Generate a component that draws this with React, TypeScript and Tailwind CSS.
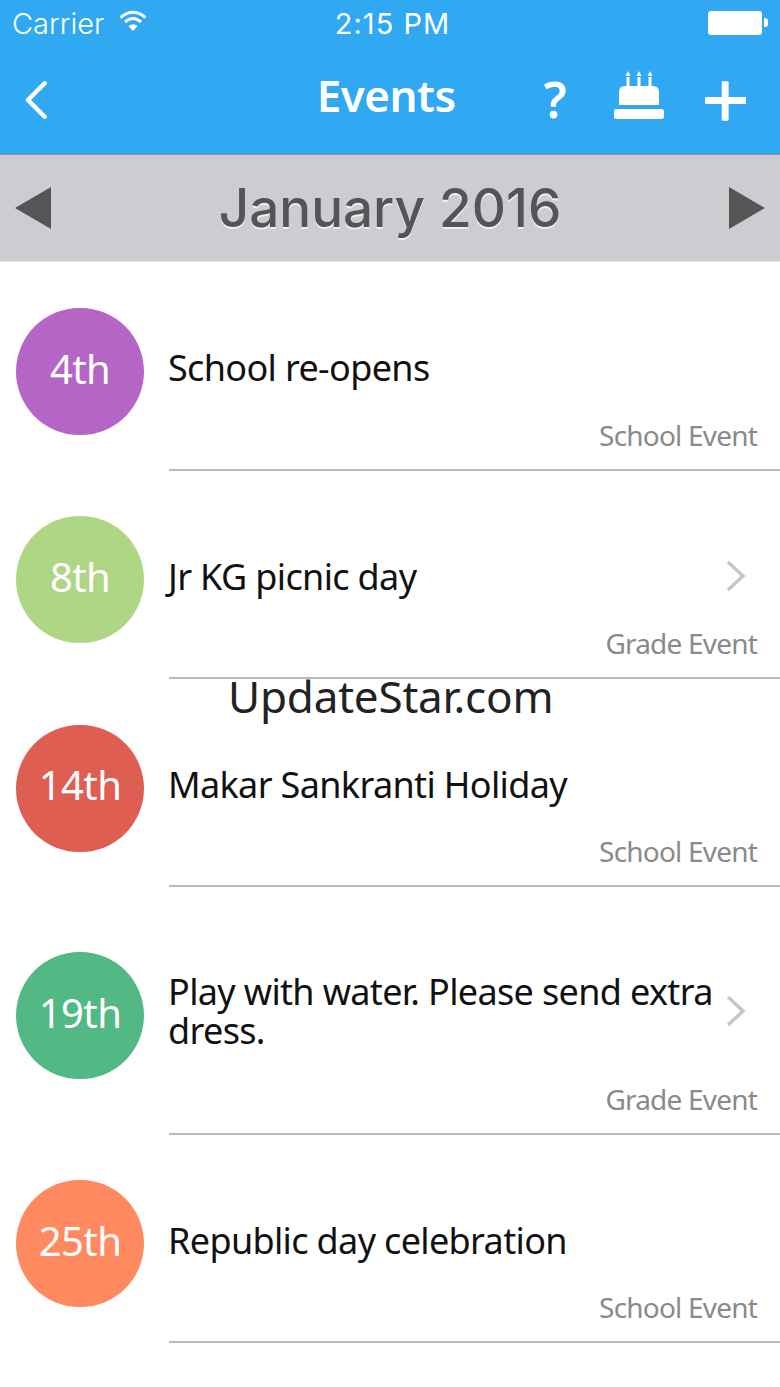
import React from "react";

const rows = [
  { day: "4th", bg: "bg-[#b565c6]", title: "School re-opens", label: "School Event", chevron: false, h: "h-[209px]", cm: "mt-[10px]" },
  { day: "8th", bg: "bg-[#afd684]", title: "Jr KG picnic day", label: "Grade Event", chevron: true, h: "h-[208px]", cm: "mt-[9px]" },
  { day: "14th", bg: "bg-[#de5f52]", title: "Makar Sankranti Holiday", label: "School Event", chevron: false, h: "h-[208px]", cm: "mt-[10px]" },
  { day: "19th", bg: "bg-[#52b985]", title: "Play with water. Please send extra dress.", label: "Grade Event", chevron: true, h: "h-[248px]", cm: "mt-[9px]" },
  { day: "25th", bg: "bg-[#ff8a5f]", title: "Republic day celebration", label: "School Event", chevron: false, h: "h-[208px]", cm: "mt-[9px]" },
];

function Cake() {
  return (
    <svg width="50" height="48" viewBox="0 0 50 48" fill="white">
      <path d="M5 34 V21 Q5 15 11 15 H39 Q45 15 45 21 V34 Z" />
      <rect x="0" y="38" width="50" height="10" rx="2.5" />
      <rect x="12.5" y="6" width="3" height="9" />
      <rect x="23.5" y="6" width="3" height="9" />
      <rect x="34.5" y="6" width="3" height="9" />
      <path d="M14 0 L16.5 5 H11.5 Z M25 0 L27.5 5 H22.5 Z M36 0 L38.5 5 H33.5 Z" />
    </svg>
  );
}

export default function App() {
  return (
    <div className="relative w-[780px] h-[1387px] bg-white overflow-hidden font-['Noto_Sans',sans-serif]">
      <header className="h-[155px] bg-[#30a8f2] border-b border-[#8f9295] text-white">
        <div className="h-[48px] flex items-center justify-between pl-3 pr-3 pb-[2px]">
          <div className="flex items-center gap-[15px] w-[200px]">
            <span className="font-['Inter',sans-serif] text-[29px] leading-none font-light">Carrier</span>
            <svg width="28" height="22" viewBox="0 0 28 22" fill="none" stroke="white" strokeWidth="3" className="-mt-1">
              <path d="M1.5 7.5 Q14 -3 26.5 7.5" />
              <path d="M6 12 Q14 5 22 12" />
              <path d="M14 21 L9.5 16 Q14 12.5 18.5 16 Z" fill="white" stroke="none" />
            </svg>
          </div>
          <span className="font-['Inter',sans-serif] text-[29px] leading-none font-normal tracking-[1px] ml-[5px]">2:15 PM</span>
          <div className="flex items-center justify-end w-[200px] -mt-[1px]">
            <div className="w-[54px] h-[24px] bg-white rounded-[3px]" />
            <div className="w-[4px] h-[9px] ml-[2px] bg-white rounded-r-[3px]" />
          </div>
        </div>
        <div className="h-[106px] flex items-center pl-[25px] pr-[34px] pb-[12px]">
          <svg width="22" height="40" viewBox="0 0 22 40" fill="none" stroke="white" strokeWidth="4.5" strokeLinecap="round" strokeLinejoin="round" className="mt-[10px]">
            <path d="M20 3 L3 20 L20 37" />
          </svg>
          <span className="ml-[270px] text-[44px] leading-none font-semibold tracking-[-0.5px]">Events</span>
          <span className="ml-[88px] text-[50px] leading-none font-semibold mt-[8px]">?</span>
          <div className="ml-[47px]"><Cake /></div>
          <svg width="42" height="40" viewBox="0 0 42 40" fill="white" className="ml-[41px] mt-[11px]">
            <rect x="0" y="16" width="42" height="7" rx="1" />
            <rect x="17" y="0" width="7" height="40" rx="1" />
          </svg>
        </div>
      </header>

      <div className="h-[107px] bg-[#cdcdd1] flex items-center justify-between px-[15px] border-b border-[#e4e4e6]">
        <svg width="37" height="42" viewBox="0 0 37 42" fill="#555555"><path d="M36 0 V42 L0 21 Z" /></svg>
        <span className="font-['Inter',sans-serif] text-[53px] leading-none font-medium text-[#555558] [text-shadow:0_2px_0_rgba(255,255,255,0.7)]">January 2016</span>
        <svg width="37" height="42" viewBox="0 0 37 42" fill="#555555"><path d="M1 0 V42 L37 21 Z" /></svg>
      </div>

      <main>
        {rows.map((r) => (
          <div key={r.day} className={`flex items-center pl-4 ${r.h}`}>
            <div className={`w-[128px] h-[127px] shrink-0 rounded-full flex items-center justify-center pb-[6px] text-white text-[40px] tracking-[-0.6px] ${r.bg} ${r.cm}`}>
              {r.day}
            </div>
            <div className="ml-[25px] flex-1 self-stretch flex flex-col border-b-2 border-[#b9b9b9] pr-[23px]">
              <div className="flex items-center mt-[85px] min-h-[40px]">
                <div className="flex-1 -ml-px text-[36px] leading-[39px] tracking-[-0.65px] text-[#111]">{r.title}</div>
                {r.chevron && (
                  <svg width="22" height="32" viewBox="0 0 22 32" fill="none" stroke="#c6c6c8" strokeWidth="3.5" className="ml-[4px] mr-[10px] shrink-0">
                    <path d="M3 2 L18 16 L3 30" />
                  </svg>
                )}
              </div>
              <div className="mt-auto mb-[18px] text-right text-[28px] leading-[32px] tracking-[-0.8px] text-[#8a8a8a]">{r.label}</div>
            </div>
          </div>
        ))}
      </main>

      <div className="absolute left-[228px] top-[669px] text-[44px] leading-[54px] tracking-[-0.2px] text-[#222]">UpdateStar.com</div>
    </div>
  );
}
